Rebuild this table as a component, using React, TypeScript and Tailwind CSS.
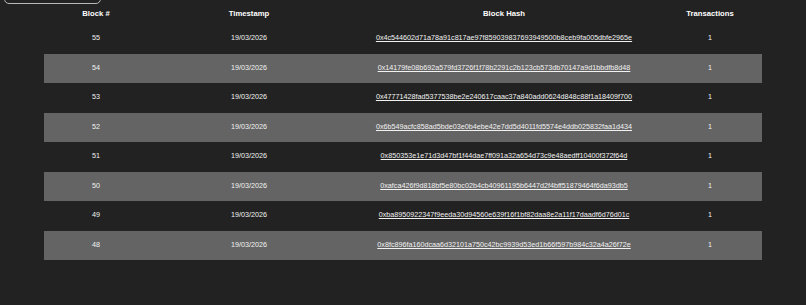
import React from 'react';

interface Block {
  number: number;
  timestamp: string;
  hash: string;
  txCount: number;
}

const blocks: Block[] = [
  { number: 55, timestamp: '19/03/2026', hash: '0x4c544602d71a78a91c817ae97f859039837693949500b8ceb9fa005dbfe2965e', txCount: 1 },
  { number: 54, timestamp: '19/03/2026', hash: '0x14179fe08b692a579fd3726f1f78b2291c2b123cb573db70147a9d1bbdfb8d48', txCount: 1 },
  { number: 53, timestamp: '19/03/2026', hash: '0x47771428fad5377538be2e240617caac37a840add0624d848c88f1a18409f700', txCount: 1 },
  { number: 52, timestamp: '19/03/2026', hash: '0x6b549acfc858ad5bde03e0b4ebe42e7dd5d4011fd5574e4ddb025832faa1d434', txCount: 1 },
  { number: 51, timestamp: '19/03/2026', hash: '0x850353e1e71d3d47bf1f44dae7ff091a32a654d73c9e48aedff10400f372f64d', txCount: 1 },
  { number: 50, timestamp: '19/03/2026', hash: '0xafca426f9d818bf5e80bc02b4cb40961195b6447d2f4bff51879464f6da93db5', txCount: 1 },
  { number: 49, timestamp: '19/03/2026', hash: '0xba8950922347f9eeda30d94560e639f16f1bf82daa8e2a11f17daadf6d76d01c', txCount: 1 },
  { number: 48, timestamp: '19/03/2026', hash: '0x8fc896fa160dcaa6d32101a750c42bc9939d53ed1b66f597b984c32a4a26f72e', txCount: 1 },
];

export default function App() {
  return (
    <div className="min-h-[305px] bg-[#222222] text-white font-['Liberation_Sans',Arial,sans-serif]">
      {/* button scrolled mostly out of view */}
      <div className="flex pl-[4px]">
        <div className="-mt-[26px] h-[30px] w-[97px] rounded-[5px] border border-[#b9b9b9]" />
      </div>

      <div className="px-[44px]">
        <table className="w-full table-fixed border-collapse">
          <colgroup>
            <col className="w-[104px]" />
            <col className="w-[202px]" />
            <col className="w-[308px]" />
            <col className="w-[104px]" />
          </colgroup>
          <thead>
            <tr className="h-[20px] text-[7.7px] font-bold">
              <th className="text-center">Block #</th>
              <th className="text-center">Timestamp</th>
              <th className="text-center">Block Hash</th>
              <th className="text-center">Transactions</th>
            </tr>
          </thead>
          <tbody>
            {blocks.map((b, i) => (
              <tr
                key={b.number}
                className={`h-[29.5px] text-[7.2px] text-[#f2f2f2] ${i % 2 === 1 ? 'bg-[#646464]' : ''}`}
              >
                <td className="text-center">{b.number}</td>
                <td className="text-center">{b.timestamp}</td>
                <td className="text-center">
                  <a href="#" className="underline">
                    {b.hash}
                  </a>
                </td>
                <td className="text-center">{b.txCount}</td>
              </tr>
            ))}
          </tbody>
        </table>
      </div>
    </div>
  );
}
